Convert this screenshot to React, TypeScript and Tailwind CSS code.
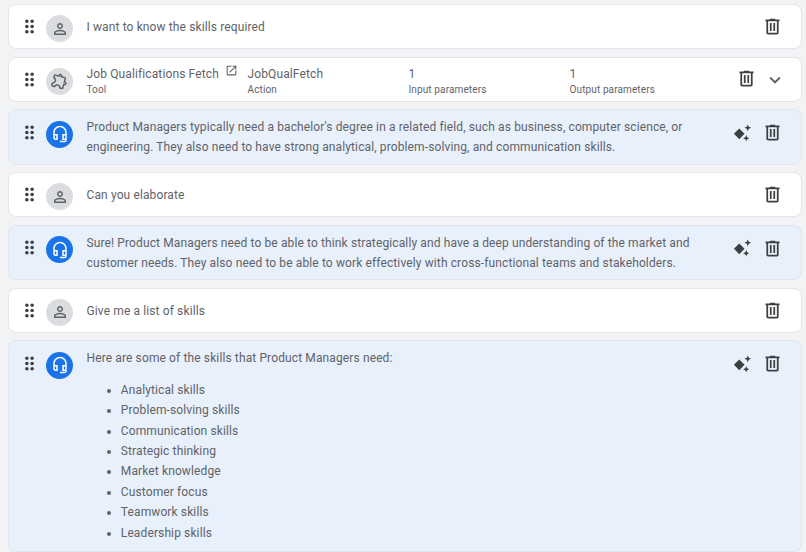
import { ReactNode } from "react";

const Icon = ({ d, className, rule }: { d: string; className: string; rule?: boolean }) => (
    <svg viewBox="0 0 24 24" className={className} fill="currentColor">
        <path d={d} fillRule={rule ? "evenodd" : "nonzero"} />
    </svg>
);

const PATHS = {
    grip: "M11 18c0 1.1-.9 2-2 2s-2-.9-2-2 .9-2 2-2 2 .9 2 2zm-2-8c-1.1 0-2 .9-2 2s.9 2 2 2 2-.9 2-2-.9-2-2-2zm0-6c-1.1 0-2 .9-2 2s.9 2 2 2 2-.9 2-2-.9-2-2-2zm6 4c1.1 0 2-.9 2-2s-.9-2-2-2-2 .9-2 2 .9 2 2 2zm0 2c-1.1 0-2 .9-2 2s.9 2 2 2 2-.9 2-2-.9-2-2-2zm0 6c-1.1 0-2 .9-2 2s.9 2 2 2 2-.9 2-2-.9-2-2-2z",
    person: "M12 5.9a2.1 2.1 0 1 1 0 4.2 2.1 2.1 0 0 1 0-4.2m0 9c2.97 0 6.1 1.46 6.1 2.1v1.1H5.9V17c0-.64 3.13-2.1 6.1-2.1M12 4C9.79 4 8 5.79 8 8s1.79 4 4 4 4-1.79 4-4-1.79-4-4-4zm0 9c-2.67 0-8 1.34-8 4v3h16v-3c0-2.66-5.33-4-8-4z",
    puzzle: "M10.5 4.5c.28 0 .5.22.5.5v2h6v6h2c.28 0 .5.22.5.5s-.22.5-.5.5h-2v6h-2.12c-.68-1.75-2.39-3-4.38-3s-3.7 1.25-4.38 3H4v-2.12c1.75-.68 3-2.39 3-4.38 0-1.99-1.24-3.7-2.99-4.38L4 7h6V5c0-.28.22-.5.5-.5m0-2C9.12 2.5 8 3.62 8 5H4c-1.1 0-1.99.9-1.99 2v3.8h.29c1.49 0 2.7 1.21 2.7 2.7s-1.21 2.7-2.7 2.7H2V20c0 1.1.9 2 2 2h3.8v-.3c0-1.49 1.21-2.7 2.7-2.7s2.7 1.21 2.7 2.7v.3H17c1.1 0 2-.9 2-2v-4c1.38 0 2.5-1.12 2.5-2.5S20.38 11 19 11V7c0-1.1-.9-2-2-2h-4c0-1.38-1.12-2.5-2.5-2.5z",
    headset: "M12 1c-4.97 0-9 4.03-9 9v7c0 1.66 1.34 3 3 3h3v-8H5v-2c0-3.87 3.13-7 7-7s7 3.13 7 7v2h-4v8h4v1h-7v2h6c1.66 0 3-1.34 3-3V10c0-4.97-4.03-9-9-9zM7 14v4H6c-.55 0-1-.45-1-1v-3h2zm12 4h-2v-4h2v4z",
    trash: "M15 4V3H9v1H4v2h1v13c0 1.1.9 2 2 2h10c1.1 0 2-.9 2-2V6h1V4h-5zm2 15H7V6h10v13zM9 8h2v9H9zm4 0h2v9h-2z",
    open: "M19 19H5V5h7V3H5c-1.11 0-2 .9-2 2v14c0 1.1.89 2 2 2h14c1.1 0 2-.9 2-2v-7h-2v7zM14 3v2h3.59l-9.83 9.83 1.41 1.41L19 6.41V10h2V3h-7z",
    chevron: "M7.41 8.59 12 13.17l4.59-4.58L18 10l-6 6-6-6 1.41-1.41z",
    sparkle: "M9 7 14.8 12.9 9 18.8 3.2 12.9zM18.3 2.6l1.1 2.6 2.6 1.1-2.6 1.1-1.1 2.6-1.1-2.6-2.6-1.1 2.6-1.1zM16.6 14.3l1 2.4 2.4 1-2.4 1-1 2.4-1-2.4-2.4-1 2.4-1z",
};

function Trash() {
    return <Icon d={PATHS.trash} className="w-[21px] h-[21px] text-[#3c4043]" />;
}

function Row({ blue, avatar, actions, children }: { blue?: boolean; avatar: ReactNode; actions: ReactNode; children: ReactNode }) {
    return (
        <div className={`flex items-start border border-[#e3e5e8] rounded-lg pl-[9.5px] pr-[18px] ${blue ? "bg-[#e8f0fc] pt-[7px] pb-[6.5px]" : "bg-white pt-[10px] h-[45px]"}`}>
            <Icon d={PATHS.grip} className={`w-[21px] h-[21px] text-[#3c4043] shrink-0 ${blue ? "mt-[4.7px]" : "mt-[1px]"}`} />
            <div className={`ml-[6.5px] shrink-0 ${blue ? "mt-[3.3px]" : ""}`}>{avatar}</div>
            <div className="ml-[13.5px] flex-1 min-w-0">{children}</div>
            {actions}
        </div>
    );
}

const UserAvatar = () => (
    <div className="w-[27px] h-[27px] rounded-full bg-[#dadce0] flex items-center justify-center">
        <Icon d={PATHS.person} className="w-[18px] h-[18px] text-[#5f6368]" />
    </div>
);

const BotAvatar = () => (
    <div className="w-[27px] h-[27px] rounded-full bg-[#1a73e8] flex items-center justify-center">
        <Icon d={PATHS.headset} className="w-[18px] h-[18px] text-white" />
    </div>
);

function UserRow({ text }: { text: string }) {
    return (
        <Row avatar={<UserAvatar />} actions={<div className="mt-[1px]"><Trash /></div>}>
            <p className="text-[12px] leading-[24px] tracking-[0.12px] text-[#5f6368]">{text}</p>
        </Row>
    );
}

function BotActions() {
    return (
        <div className="flex items-center gap-[9.5px] mt-[4.7px] shrink-0">
            <Icon d={PATHS.sparkle} className="w-[22px] h-[22px] text-[#3c4043]" />
            <Trash />
        </div>
    );
}

function BotRow({ children }: { children: ReactNode }) {
    return (
        <Row blue avatar={<BotAvatar />} actions={<BotActions />}>
            {children}
        </Row>
    );
}

function Field({ title, sub, className }: { title: ReactNode; sub: string; className: string }) {
    return (
        <div className={className}>
            <div className="text-[12px] leading-[17px] tracking-[0.12px] text-[#5f6368]">{title}</div>
            <div className="text-[10px] leading-[14px] tracking-[0.12px] text-[#5f6368]">{sub}</div>
        </div>
    );
}

const skills = [
    "Analytical skills",
    "Problem-solving skills",
    "Communication skills",
    "Strategic thinking",
    "Market knowledge",
    "Customer focus",
    "Teamwork skills",
    "Leadership skills",
];

const Para = ({ children }: { children: ReactNode }) => (
    <p className="text-[12px] leading-[20px] tracking-[0.12px] text-[#5f6368] pr-6">{children}</p>
);

export default function App() {
    return (
        <div className="h-[552px] overflow-hidden bg-[#f1f3f4] pl-2 pr-1 pt-[4.3px] flex flex-col gap-[7.5px] font-['Roboto',sans-serif]">
            <UserRow text="I want to know the skills required" />
            <Row
                avatar={
                    <div className="w-[27px] h-[27px] rounded-full bg-[#dadce0] flex items-center justify-center">
                        <Icon d={PATHS.puzzle} className="w-[18px] h-[18px] text-[#5f6368] rotate-[15deg]" />
                    </div>
                }
                actions={
                    <div className="flex items-start gap-[7px] shrink-0 mt-[0.7px] -mr-[2.5px]">
                        <Trash />
                        <Icon d={PATHS.chevron} className="w-[22px] h-[22px] mt-[1px] text-[#5f6368]" />
                    </div>
                }
            >
                <div className="flex -mt-[2px]">
                    <Field
                        className="w-[161px]"
                        sub="Tool"
                        title={
                            <span className="flex items-start gap-[6px]">
                                Job Qualifications Fetch
                                <Icon d={PATHS.open} className="w-[13px] h-[13px] mt-[-2px] text-[#5f6368]" />
                            </span>
                        }
                    />
                    <Field className="w-[161px]" title="JobQualFetch" sub="Action" />
                    <Field className="w-[161px]" title="1" sub="Input parameters" />
                    <Field className="w-[130px]" title="1" sub="Output parameters" />
                </div>
            </Row>
            <BotRow>
                <Para>
                    Product Managers typically need a bachelor's degree in a related field, such as business, computer science, or engineering. They also need to have strong analytical, problem-solving, and communication skills.
                </Para>
            </BotRow>
            <UserRow text="Can you elaborate" />
            <BotRow>
                <Para>
                    Sure! Product Managers need to be able to think strategically and have a deep understanding of the market and customer needs. They also need to be able to work effectively with cross-functional teams and stakeholders.
                </Para>
            </BotRow>
            <UserRow text="Give me a list of skills" />
            <BotRow>
                <Para>Here are some of the skills that Product Managers need:</Para>
                <ul className="list-disc pl-[34.3px] mt-[11.5px] mb-[1px] text-[12px] leading-[20.4px] tracking-[0.12px] text-[#5f6368]">
                    {skills.map((s) => (
                        <li key={s}>{s}</li>
                    ))}
                </ul>
            </BotRow>
        </div>
    );
}
